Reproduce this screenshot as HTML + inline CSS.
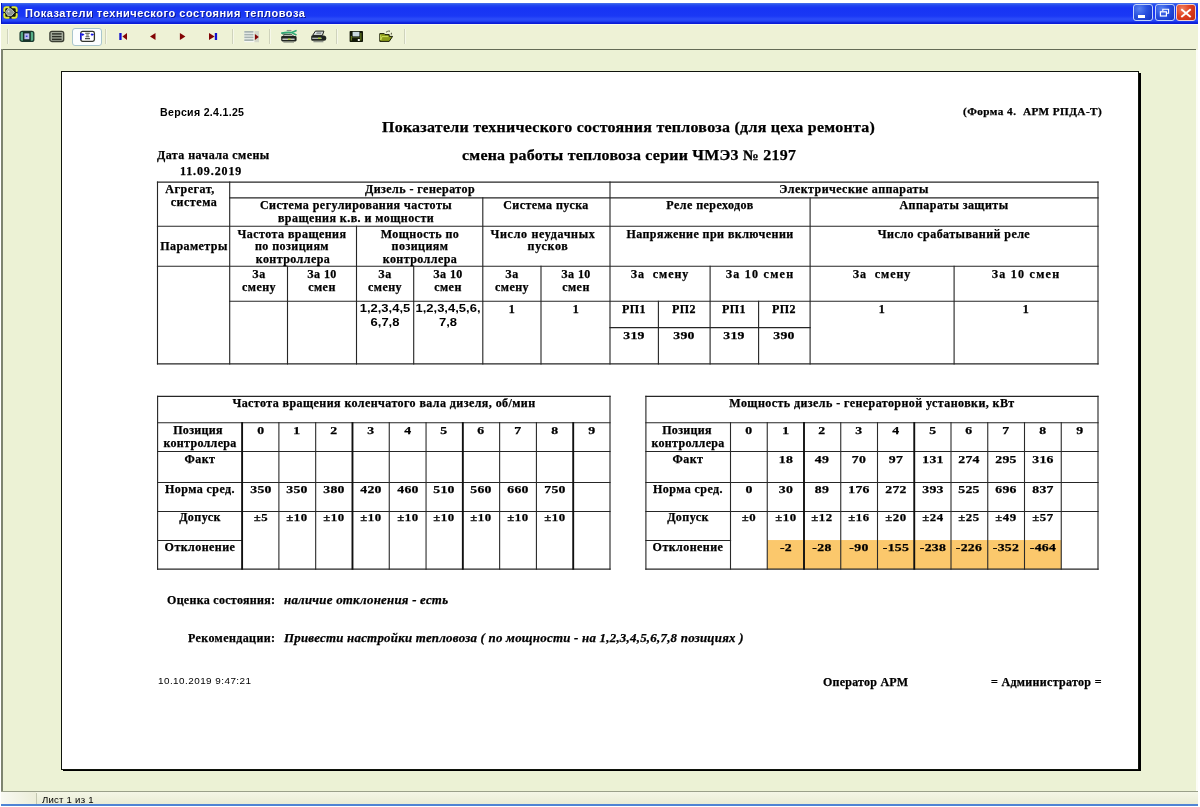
<!DOCTYPE html>
<html lang="ru"><head><meta charset="utf-8"><title>Показатели технического состояния тепловоза</title>
<style>
html,body{margin:0;padding:0}
body{width:1200px;height:807px;background:#fff;position:relative;overflow:hidden}
body>div,body>svg,body div>div,body div>svg{position:absolute}
.t{white-space:pre;will-change:transform}
.b{-webkit-text-stroke:0.25px #000}
</style></head>
<body>
<div style="left:1px;top:3px;width:1197px;height:803px;background:#EEF2D6"></div>
<div style="left:1px;top:3px;width:1197px;height:21px;background:linear-gradient(to bottom,#4a74ea 0,#2348f0 2px,#1734f4 5px,#1a38f5 13px,#2c4cf8 16px,#2444f4 18px,#0a1cd8 20px,#0a1cd8 21px)"></div>
<div style="left:1px;top:3px;width:1px;height:21px;background:#0a18c0"></div>
<svg style="left:3px;top:6px" width="15" height="13" viewBox="0 0 15 13">
<rect x="0.5" y="0.5" width="14" height="12" rx="2.5" fill="#10140c"/>
<path d="M1.3 5V3.2Q1.3 1.3 3.2 1.3H5.6" fill="none" stroke="#dde93a" stroke-width="2" stroke-linecap="round"/>
<path d="M9.4 1.3H11.8Q13.7 1.3 13.7 3.2V5" fill="none" stroke="#dde93a" stroke-width="2" stroke-linecap="round"/>
<path d="M1.3 8V9.8Q1.3 11.7 3.2 11.7H5.6" fill="none" stroke="#dde93a" stroke-width="2" stroke-linecap="round"/>
<path d="M9.4 11.7H11.8Q13.7 11.7 13.7 9.8V8" fill="none" stroke="#dde93a" stroke-width="2" stroke-linecap="round"/>
<path d="M2.6 6.2L5 2.6L8.2 2.9L11.3 6.4L8.4 9.8L4.8 9.6Z" fill="#8d9690" stroke="#c9cfca" stroke-width="0.9"/>
<circle cx="5.6" cy="5.4" r="0.9" fill="#dfe3df"/>
</svg>
<div class="t" style="left:25px;top:6px;font:bold 11px/14px 'Liberation Sans',sans-serif;color:#fff;letter-spacing:0.52px;text-shadow:1px 1px 0 #0a1890">Показатели технического состояния тепловоза</div>
<div style="left:1133px;top:4px;width:18px;height:15px;border:1px solid #c4d4fa;border-radius:3px;background:radial-gradient(circle at 30% 25%,#5a82f0 0,#2850e0 45%,#1030c0 100%)"><div style="left:4px;top:10px;width:7px;height:3px;background:#fff"></div></div>
<div style="left:1155px;top:4px;width:18px;height:15px;border:1px solid #c4d4fa;border-radius:3px;background:radial-gradient(circle at 30% 25%,#5a82f0 0,#2850e0 45%,#1030c0 100%)"><svg style="left:0;top:0" width="18" height="15" viewBox="0 0 18 15"><path d="M6.8 6V4.2H12.6V8.2H11" fill="none" stroke="#fff" stroke-width="1.1"/><rect x="4.4" y="6.8" width="6" height="4.2" fill="none" stroke="#fff" stroke-width="1.2"/></svg></div>
<div style="left:1176px;top:4px;width:18px;height:15px;border:1px solid #f4d2cc;border-radius:3px;background:radial-gradient(circle at 30% 25%,#f08060 0,#e04020 45%,#c02810 100%)"><svg style="left:0;top:0" width="18" height="15" viewBox="0 0 18 15"><path d="M4.3 4.2L13.7 12M13.7 4.2L4.3 12" stroke="#fff" stroke-width="1.9" fill="none"/></svg></div>
<div style="left:1px;top:24px;width:1197px;height:1px;background:#f8faee"></div>
<div style="left:7px;top:29px;width:1px;height:15px;background:#cfd3bc"></div>
<div style="left:8px;top:29px;width:1px;height:15px;background:#f6f8ea"></div>
<div style="left:105px;top:29px;width:1px;height:15px;background:#cfd3bc"></div>
<div style="left:106px;top:29px;width:1px;height:15px;background:#f6f8ea"></div>
<div style="left:232px;top:29px;width:1px;height:15px;background:#cfd3bc"></div>
<div style="left:233px;top:29px;width:1px;height:15px;background:#f6f8ea"></div>
<div style="left:269px;top:29px;width:1px;height:15px;background:#cfd3bc"></div>
<div style="left:270px;top:29px;width:1px;height:15px;background:#f6f8ea"></div>
<div style="left:336px;top:29px;width:1px;height:15px;background:#cfd3bc"></div>
<div style="left:337px;top:29px;width:1px;height:15px;background:#f6f8ea"></div>
<div style="left:404px;top:29px;width:1px;height:15px;background:#cfd3bc"></div>
<div style="left:405px;top:29px;width:1px;height:15px;background:#f6f8ea"></div>
<div style="left:3px;top:50px;width:1193px;height:741px;background:#ECF2D5"></div>
<div style="left:2px;top:49px;width:1194px;height:1px;background:#646b56"></div>
<div style="left:1px;top:49px;width:2px;height:742px;background:#7d8470"></div>
<div style="left:1196px;top:50px;width:2px;height:741px;background:#fcfdf6"></div>
<div style="left:1px;top:791px;width:1197px;height:1px;background:#9aa08a"></div>
<div style="left:1px;top:792px;width:1197px;height:12px;background:linear-gradient(to bottom,#f4f6e6,#e9ecd4)"></div>
<div style="left:1px;top:792px;width:35px;height:12px;background:linear-gradient(to right,#f8f9f2,#eceed9)"></div>
<div style="left:36px;top:793px;width:1px;height:11px;background:#c3c7b0"></div>
<div style="left:1px;top:804px;width:1197px;height:2px;background:#4f84d4"></div>
<svg style="left:19px;top:30px" width="16" height="13" viewBox="0 0 16 13">
<rect x="1.1" y="1.4" width="13.7" height="10" rx="2" fill="#58ae88" stroke="#1b3a2e" stroke-width="1.3"/>
<rect x="3.9" y="1.6" width="7.9" height="9.6" fill="#173128"/>
<rect x="5.4" y="3.4" width="4.9" height="5.8" fill="#bcbcf2"/>
<rect x="6.8" y="5.6" width="1.7" height="1.3" fill="#2830c8"/>
</svg>
<svg style="left:49px;top:30px" width="16" height="13" viewBox="0 0 16 13">
<rect x="0.9" y="1.3" width="13.8" height="10.2" rx="2" fill="#a4ab9c" stroke="#3a3e33" stroke-width="1.3"/>
<rect x="3" y="3.2" width="9.6" height="1.4" fill="#2b2f27"/>
<rect x="3" y="5.9" width="9.6" height="1.4" fill="#2b2f27"/>
<rect x="3" y="8.6" width="9.6" height="1.4" fill="#2b2f27"/>
</svg>
<div style="left:72px;top:28px;width:28px;height:16px;border:1px solid #a9c6cc;border-radius:3px;background:#fbfeff"></div>
<svg style="left:80px;top:30px" width="16" height="13" viewBox="0 0 16 13">
<rect x="0.8" y="1.4" width="13.6" height="10" rx="1.8" fill="#fff" stroke="#33372f" stroke-width="1.3"/>
<path d="M0.8 3V9.8" stroke="#1212e6" stroke-width="1.4"/>
<path d="M1.2 4.6L3.2 2.9V6.3ZM13.6 4.6L11.6 2.9V6.3Z" fill="#1212e6"/>
<path d="M1.5 4.6H4.2M10.8 4.6H13.6" stroke="#1212e6" stroke-width="1"/>
<path d="M5.2 3.3H9.8M6.2 5H8.8M5.6 6.8H9.4M5 8.6H10" stroke="#4a4e48" stroke-width="1.1"/>
</svg>
<svg style="left:118px;top:32px" width="12" height="10" viewBox="0 0 12 10">
<rect x="1.3" y="1" width="2.3" height="7" fill="#1010d0"/><path d="M4.4 4.5L9 1V8Z" fill="#820404"/></svg>
<svg style="left:148px;top:32px" width="12" height="10" viewBox="0 0 12 10">
<path d="M2 4.5L7.5 0.9V8.1Z" fill="#820404"/></svg>
<svg style="left:178px;top:32px" width="12" height="10" viewBox="0 0 12 10">
<path d="M7.4 4.5L1.9 0.9V8.1Z" fill="#820404"/></svg>
<svg style="left:207px;top:32px" width="12" height="10" viewBox="0 0 12 10">
<path d="M7.6 4.5L2 0.9V8.1Z" fill="#820404"/><rect x="7.8" y="1" width="2.3" height="7" fill="#1010d0"/></svg>
<svg style="left:244px;top:30px" width="16" height="13" viewBox="0 0 16 13">
<rect x="0.3" y="1" width="10.2" height="11.2" fill="#f6f8f4"/>
<rect x="10.5" y="1" width="4.5" height="11.2" fill="#d3d7ca"/>
<path d="M0.3 1.8H9.5M0.3 4.6H9.5M0.3 7.4H9.5M0.3 10.2H9.5" stroke="#a7b3b1" stroke-width="1.7"/>
<path d="M14.8 7L10.9 4V10Z" fill="#820404"/></svg>
<svg style="left:280px;top:29px" width="18" height="14" viewBox="0 0 18 14">
<path d="M6.7 1.5H11.4" stroke="#8a908a" stroke-width="1.1"/>
<path d="M3.4 7.2L4.2 5.6H12L13.6 7.2Z" fill="#f4f6f0" stroke="#2a2e28" stroke-width="0.7"/>
<path d="M2.2 7H15.2Q16.6 7 16.6 8.4V11Q16.6 12.4 15.2 12.4H2.6Q1.2 12.4 1.2 11V8.2Q1.2 7 2.2 7Z" fill="#1f2420"/>
<path d="M2.4 10.2H14.6" stroke="#f0f2ea" stroke-width="1.2"/>
<rect x="7.9" y="9.6" width="2.8" height="1.2" fill="#a8d020"/>
<path d="M3.4 13.1H14" stroke="#6e746c" stroke-width="0.9"/>
<path d="M1.8 4.1Q7 3 11.6 3.6L16 1.7M11.6 3.6L16 5.7" fill="none" stroke="#2faa76" stroke-width="1.6" stroke-linecap="round"/>
<path d="M2.4 5.2H10.5" stroke="#1c4a38" stroke-width="0.8"/>
</svg>
<svg style="left:310px;top:30px" width="18" height="13" viewBox="0 0 18 13">
<path d="M5.4 1.1H13.9L12.4 5.4H2.6Z" fill="#dfe4e4" stroke="#1c201a" stroke-width="1"/>
<path d="M6.9 2.4H11.6L11 3.8H6.1Z" fill="#737d80"/>
<path d="M2.2 5.4H14.2Q16.6 5.8 16.4 8.2Q16.2 10.8 14 10.8H2.6Q1.2 10.8 1.2 9.4V6.6Q1.2 5.4 2.2 5.4Z" fill="#1f2420"/>
<path d="M2.2 8.3H11.6" stroke="#c3c9c6" stroke-width="1.2"/>
<rect x="8" y="7.6" width="2.8" height="1.2" fill="#a8d020"/>
<path d="M3.4 11.7H13.4" stroke="#7e847e" stroke-width="1.1"/>
</svg>
<svg style="left:349px;top:30px" width="15" height="13" viewBox="0 0 15 13">
<rect x="0.6" y="1" width="13.4" height="11" rx="0.8" fill="#121808"/>
<rect x="3.6" y="1.8" width="6.8" height="4.6" fill="#c9d9de"/>
<path d="M2.3 6V10.5M11.9 3V10.5" stroke="#7e9a26" stroke-width="0.9"/>
<path d="M3 7.6H11" stroke="#5a6a30" stroke-width="0.6"/>
<rect x="8.8" y="9" width="2" height="2" fill="#f2f4ee"/>
</svg>
<svg style="left:379px;top:30px" width="15" height="13" viewBox="0 0 15 13">
<path d="M0.8 3.6H5.2L6 4.6H10.2V6.4H13.6L10.2 11.4H0.8Z" fill="#8c9c1a" stroke="#1a1e0a" stroke-width="1"/>
<path d="M1.7 4.6V10L3 6.6H9.4" fill="none" stroke="#cfe05a" stroke-width="1"/>
<path d="M7.2 2.2Q9.6 0.2 11.4 1.6" fill="none" stroke="#23270f" stroke-width="0.9" stroke-dasharray="1.6 0.8"/>
<path d="M12.4 2.2L11.6 4.2L12.9 4.5Z" fill="#23270f"/>
</svg>
<div style="left:63px;top:73px;width:1078px;height:698px;background:#000"></div>
<div style="left:61px;top:71px;width:1076px;height:697px;background:#fff;border:1px solid #10140c"></div>
<div style="left:0;top:0;width:1200px;height:807px;filter:blur(0.35px)"><svg style="left:0;top:0" width="1200" height="807" viewBox="0 0 1200 807" fill="none"><path d="M156.90 182.1H1098.60" stroke="#262626" stroke-width="1.12"/><path d="M229.10 197.9H1098.60" stroke="#262626" stroke-width="1.12"/><path d="M156.90 226.3H1098.60" stroke="#262626" stroke-width="1.12"/><path d="M156.90 266.3H1098.60" stroke="#262626" stroke-width="1.12"/><path d="M229.10 301.3H1098.60" stroke="#262626" stroke-width="1.12"/><path d="M609.40 327.6H810.70" stroke="#262626" stroke-width="1.12"/><path d="M156.90 363.9H1098.60" stroke="#262626" stroke-width="1.12"/><path d="M157.5 181.50V364.50" stroke="#262626" stroke-width="1.12"/><path d="M229.7 181.50V364.50" stroke="#262626" stroke-width="1.12"/><path d="M610.0 181.50V364.50" stroke="#262626" stroke-width="1.12"/><path d="M1098.0 181.50V364.50" stroke="#262626" stroke-width="1.12"/><path d="M482.8 197.30V364.50" stroke="#262626" stroke-width="1.12"/><path d="M810.1 197.30V364.50" stroke="#262626" stroke-width="1.12"/><path d="M356.5 225.70V364.50" stroke="#262626" stroke-width="1.12"/><path d="M287.5 265.70V364.50" stroke="#262626" stroke-width="1.12"/><path d="M413.7 265.70V364.50" stroke="#262626" stroke-width="1.12"/><path d="M541.0 265.70V364.50" stroke="#262626" stroke-width="1.12"/><path d="M710.1 265.70V364.50" stroke="#262626" stroke-width="1.12"/><path d="M954.1 265.70V364.50" stroke="#262626" stroke-width="1.12"/><path d="M658.4 300.70V364.50" stroke="#262626" stroke-width="1.12"/><path d="M758.6 300.70V364.50" stroke="#262626" stroke-width="1.12"/><path d="M157.00 396.4H610.60" stroke="#262626" stroke-width="1.12"/><path d="M157.00 422.7H610.60" stroke="#262626" stroke-width="1.12"/><path d="M157.00 451.5H610.60" stroke="#262626" stroke-width="1.12"/><path d="M157.00 482.45H610.60" stroke="#262626" stroke-width="1.12"/><path d="M157.00 511.5H610.60" stroke="#262626" stroke-width="1.12"/><path d="M157.00 569.1H610.60" stroke="#262626" stroke-width="1.12"/><path d="M157.00 540.55H242.70" stroke="#262626" stroke-width="1.12"/><path d="M157.6 395.80V569.70" stroke="#262626" stroke-width="1.12"/><path d="M610.0 395.80V569.70" stroke="#262626" stroke-width="1.12"/><path d="M242.1 422.10V569.70" stroke="#101010" stroke-width="1.9"/><path d="M278.89 422.10V569.70" stroke="#2a2a2a" stroke-width="1.1"/><path d="M315.68 422.10V569.70" stroke="#2a2a2a" stroke-width="1.1"/><path d="M352.47 422.10V569.70" stroke="#101010" stroke-width="1.9"/><path d="M389.26 422.10V569.70" stroke="#2a2a2a" stroke-width="1.1"/><path d="M426.05 422.10V569.70" stroke="#2a2a2a" stroke-width="1.1"/><path d="M462.84 422.10V569.70" stroke="#101010" stroke-width="1.9"/><path d="M499.63 422.10V569.70" stroke="#2a2a2a" stroke-width="1.1"/><path d="M536.42 422.10V569.70" stroke="#2a2a2a" stroke-width="1.1"/><path d="M573.21 422.10V569.70" stroke="#101010" stroke-width="1.9"/><rect x="767.25" y="540.05" width="294.00" height="29.05" fill="#fbc86c"/><path d="M645.30 396.4H1098.60" stroke="#262626" stroke-width="1.12"/><path d="M645.30 422.7H1098.60" stroke="#262626" stroke-width="1.12"/><path d="M645.30 451.5H1098.60" stroke="#262626" stroke-width="1.12"/><path d="M645.30 482.45H1098.60" stroke="#262626" stroke-width="1.12"/><path d="M645.30 511.5H1098.60" stroke="#262626" stroke-width="1.12"/><path d="M645.30 569.1H1098.60" stroke="#262626" stroke-width="1.12"/><path d="M645.30 540.55H731.10" stroke="#262626" stroke-width="1.12"/><path d="M645.9 395.80V569.70" stroke="#262626" stroke-width="1.12"/><path d="M1098.0 395.80V569.70" stroke="#262626" stroke-width="1.12"/><path d="M730.5 422.10V569.70" stroke="#2a2a2a" stroke-width="1.1"/><path d="M767.25 422.10V569.70" stroke="#2a2a2a" stroke-width="1.1"/><path d="M804.0 422.10V569.70" stroke="#101010" stroke-width="1.9"/><path d="M840.75 422.10V569.70" stroke="#2a2a2a" stroke-width="1.1"/><path d="M877.5 422.10V569.70" stroke="#2a2a2a" stroke-width="1.1"/><path d="M914.25 422.10V569.70" stroke="#101010" stroke-width="1.9"/><path d="M951.0 422.10V569.70" stroke="#2a2a2a" stroke-width="1.1"/><path d="M987.75 422.10V569.70" stroke="#2a2a2a" stroke-width="1.1"/><path d="M1024.5 422.10V569.70" stroke="#2a2a2a" stroke-width="1.1"/><path d="M1061.25 422.10V569.70" stroke="#2a2a2a" stroke-width="1.1"/></svg>
<div class="t" style="letter-spacing:0.278px;left:160.3px;top:108.21px;font:normal bold 10px/10px 'Liberation Sans',sans-serif;color:#000;transform:scaleX(1.06);transform-origin:0 0;">Версия 2.4.1.25</div>
<div class="t b" style="letter-spacing:0.399px;left:962.5px;top:106.81px;font:normal bold 10px/10px 'Liberation Serif',serif;color:#000;transform:scaleX(1.12);transform-origin:0 0;">(Форма 4.  АРМ РПДА-Т)</div>
<div class="t b" style="letter-spacing:0.240px;left:382.4px;top:120.0px;font:normal bold 14.5px/14.5px 'Liberation Serif',serif;color:#000;transform:scaleX(1.1);transform-origin:0 0;">Показатели технического состояния тепловоза (для цеха ремонта)</div>
<div class="t b" style="letter-spacing:0.199px;left:461.8px;top:147.61px;font:normal bold 14.5px/14.5px 'Liberation Serif',serif;color:#000;transform:scaleX(1.1);transform-origin:0 0;">смена работы тепловоза серии ЧМЭ3 № 2197</div>
<div class="t b" style="letter-spacing:0.441px;left:157px;top:149.21px;font:normal bold 12px/12px 'Liberation Serif',serif;color:#000;">Дата начала смены</div>
<div class="t b" style="letter-spacing:0.884px;left:180px;top:164.71px;font:normal bold 12px/12px 'Liberation Serif',serif;color:#000;">11.09.2019</div>
<div class="t b" style="left:-59.7px;top:184.4px;width:500px;text-align:center;font:normal bold 11.5px/11.5px 'Liberation Serif',serif;color:#000;transform:scaleX(1.045);letter-spacing:0.5px;">Агрегат,</div>
<div class="t b" style="left:-56.4px;top:196.81px;width:500px;text-align:center;font:normal bold 11.5px/11.5px 'Liberation Serif',serif;color:#000;transform:scaleX(1.045);letter-spacing:0.5px;">система</div>
<div class="t b" style="left:-56.4px;top:241.01px;width:500px;text-align:center;font:normal bold 11.5px/11.5px 'Liberation Serif',serif;color:#000;transform:scaleX(1.045);letter-spacing:0.42px;">Параметры</div>
<div class="t b" style="left:169.85px;top:184.4px;width:500px;text-align:center;font:normal bold 11.5px/11.5px 'Liberation Serif',serif;color:#000;transform:scaleX(1.045);letter-spacing:0.42px;">Дизель - генератор</div>
<div class="t b" style="left:604.0px;top:184.4px;width:500px;text-align:center;font:normal bold 11.5px/11.5px 'Liberation Serif',serif;color:#000;transform:scaleX(1.045);letter-spacing:0.42px;">Электрические аппараты</div>
<div class="t b" style="left:106.25px;top:200.21px;width:500px;text-align:center;font:normal bold 11.5px/11.5px 'Liberation Serif',serif;color:#000;transform:scaleX(1.045);letter-spacing:0.42px;">Система регулирования частоты</div>
<div class="t b" style="left:106.25px;top:212.6px;width:500px;text-align:center;font:normal bold 11.5px/11.5px 'Liberation Serif',serif;color:#000;transform:scaleX(1.045);letter-spacing:0.42px;">вращения к.в. и мощности</div>
<div class="t b" style="left:296.4px;top:200.21px;width:500px;text-align:center;font:normal bold 11.5px/11.5px 'Liberation Serif',serif;color:#000;transform:scaleX(1.045);letter-spacing:0.42px;">Система пуска</div>
<div class="t b" style="left:460.05px;top:200.21px;width:500px;text-align:center;font:normal bold 11.5px/11.5px 'Liberation Serif',serif;color:#000;transform:scaleX(1.045);letter-spacing:0.42px;">Реле переходов</div>
<div class="t b" style="left:704.05px;top:200.21px;width:500px;text-align:center;font:normal bold 11.5px/11.5px 'Liberation Serif',serif;color:#000;transform:scaleX(1.045);letter-spacing:0.42px;">Аппараты защиты</div>
<div class="t b" style="left:41.9px;top:228.6px;width:500px;text-align:center;font:normal bold 11.5px/11.5px 'Liberation Serif',serif;color:#000;transform:scaleX(1.045);letter-spacing:0.42px;">Частота вращения</div>
<div class="t b" style="left:42.1px;top:241.31px;width:500px;text-align:center;font:normal bold 11.5px/11.5px 'Liberation Serif',serif;color:#000;transform:scaleX(1.045);letter-spacing:0.42px;">по позициям</div>
<div class="t b" style="left:43.1px;top:254.01px;width:500px;text-align:center;font:normal bold 11.5px/11.5px 'Liberation Serif',serif;color:#000;transform:scaleX(1.045);letter-spacing:0.42px;">контроллера</div>
<div class="t b" style="left:169.65px;top:228.6px;width:500px;text-align:center;font:normal bold 11.5px/11.5px 'Liberation Serif',serif;color:#000;transform:scaleX(1.045);letter-spacing:0.42px;">Мощность по</div>
<div class="t b" style="left:169.65px;top:241.31px;width:500px;text-align:center;font:normal bold 11.5px/11.5px 'Liberation Serif',serif;color:#000;transform:scaleX(1.045);letter-spacing:0.42px;">позициям</div>
<div class="t b" style="left:169.65px;top:254.01px;width:500px;text-align:center;font:normal bold 11.5px/11.5px 'Liberation Serif',serif;color:#000;transform:scaleX(1.045);letter-spacing:0.42px;">контроллера</div>
<div class="t b" style="left:293.1px;top:228.6px;width:500px;text-align:center;font:normal bold 11.5px/11.5px 'Liberation Serif',serif;color:#000;transform:scaleX(1.045);letter-spacing:0.65px;">Число неудачных</div>
<div class="t b" style="left:297.9px;top:241.01px;width:500px;text-align:center;font:normal bold 11.5px/11.5px 'Liberation Serif',serif;color:#000;transform:scaleX(1.045);letter-spacing:0.65px;">пусков</div>
<div class="t b" style="left:460.05px;top:228.6px;width:500px;text-align:center;font:normal bold 11.5px/11.5px 'Liberation Serif',serif;color:#000;transform:scaleX(1.045);letter-spacing:0.42px;">Напряжение при включении</div>
<div class="t b" style="left:704.05px;top:228.6px;width:500px;text-align:center;font:normal bold 11.5px/11.5px 'Liberation Serif',serif;color:#000;transform:scaleX(1.045);letter-spacing:0.42px;">Число срабатываний реле</div>
<div class="t b" style="left:8.6px;top:268.6px;width:500px;text-align:center;font:normal bold 11.5px/11.5px 'Liberation Serif',serif;color:#000;transform:scaleX(1.045);letter-spacing:0.42px;">За</div>
<div class="t b" style="left:8.6px;top:281.71px;width:500px;text-align:center;font:normal bold 11.5px/11.5px 'Liberation Serif',serif;color:#000;transform:scaleX(1.045);letter-spacing:0.42px;">смену</div>
<div class="t b" style="left:72.0px;top:268.6px;width:500px;text-align:center;font:normal bold 11.5px/11.5px 'Liberation Serif',serif;color:#000;transform:scaleX(1.045);letter-spacing:0.42px;">За 10</div>
<div class="t b" style="left:72.0px;top:281.71px;width:500px;text-align:center;font:normal bold 11.5px/11.5px 'Liberation Serif',serif;color:#000;transform:scaleX(1.045);letter-spacing:0.42px;">смен</div>
<div class="t b" style="left:135.1px;top:268.6px;width:500px;text-align:center;font:normal bold 11.5px/11.5px 'Liberation Serif',serif;color:#000;transform:scaleX(1.045);letter-spacing:0.42px;">За</div>
<div class="t b" style="left:135.1px;top:281.71px;width:500px;text-align:center;font:normal bold 11.5px/11.5px 'Liberation Serif',serif;color:#000;transform:scaleX(1.045);letter-spacing:0.42px;">смену</div>
<div class="t b" style="left:198.25px;top:268.6px;width:500px;text-align:center;font:normal bold 11.5px/11.5px 'Liberation Serif',serif;color:#000;transform:scaleX(1.045);letter-spacing:0.42px;">За 10</div>
<div class="t b" style="left:198.25px;top:281.71px;width:500px;text-align:center;font:normal bold 11.5px/11.5px 'Liberation Serif',serif;color:#000;transform:scaleX(1.045);letter-spacing:0.42px;">смен</div>
<div class="t b" style="left:261.9px;top:268.6px;width:500px;text-align:center;font:normal bold 11.5px/11.5px 'Liberation Serif',serif;color:#000;transform:scaleX(1.045);letter-spacing:0.42px;">За</div>
<div class="t b" style="left:261.9px;top:281.71px;width:500px;text-align:center;font:normal bold 11.5px/11.5px 'Liberation Serif',serif;color:#000;transform:scaleX(1.045);letter-spacing:0.42px;">смену</div>
<div class="t b" style="left:325.5px;top:268.6px;width:500px;text-align:center;font:normal bold 11.5px/11.5px 'Liberation Serif',serif;color:#000;transform:scaleX(1.045);letter-spacing:0.42px;">За 10</div>
<div class="t b" style="left:325.5px;top:281.71px;width:500px;text-align:center;font:normal bold 11.5px/11.5px 'Liberation Serif',serif;color:#000;transform:scaleX(1.045);letter-spacing:0.42px;">смен</div>
<div class="t b" style="left:410.05px;top:268.6px;width:500px;text-align:center;font:normal bold 11.5px/11.5px 'Liberation Serif',serif;color:#000;transform:scaleX(1.045);letter-spacing:0.9px;">За  смену</div>
<div class="t b" style="left:510.1px;top:268.6px;width:500px;text-align:center;font:normal bold 11.5px/11.5px 'Liberation Serif',serif;color:#000;transform:scaleX(1.045);letter-spacing:1.2px;">За 10 смен</div>
<div class="t b" style="left:632.1px;top:268.6px;width:500px;text-align:center;font:normal bold 11.5px/11.5px 'Liberation Serif',serif;color:#000;transform:scaleX(1.045);letter-spacing:0.9px;">За  смену</div>
<div class="t b" style="left:776.05px;top:268.6px;width:500px;text-align:center;font:normal bold 11.5px/11.5px 'Liberation Serif',serif;color:#000;transform:scaleX(1.045);letter-spacing:1.2px;">За 10 смен</div>
<div class="t" style="left:135.1px;top:304.01px;width:500px;text-align:center;font:normal bold 10px/10px 'Liberation Sans',sans-serif;color:#000;transform:scaleX(1.3);letter-spacing:0px;">1,2,3,4,5</div>
<div class="t" style="left:135.1px;top:317.9px;width:500px;text-align:center;font:normal bold 10px/10px 'Liberation Sans',sans-serif;color:#000;transform:scaleX(1.3);letter-spacing:0px;">6,7,8</div>
<div class="t" style="left:198.25px;top:304.01px;width:500px;text-align:center;font:normal bold 10px/10px 'Liberation Sans',sans-serif;color:#000;transform:scaleX(1.3);letter-spacing:0px;">1,2,3,4,5,6,</div>
<div class="t" style="left:198.25px;top:317.9px;width:500px;text-align:center;font:normal bold 10px/10px 'Liberation Sans',sans-serif;color:#000;transform:scaleX(1.3);letter-spacing:0px;">7,8</div>
<div class="t b" style="left:261.9px;top:303.6px;width:500px;text-align:center;font:normal bold 11.5px/11.5px 'Liberation Serif',serif;color:#000;transform:scaleX(1.045);letter-spacing:0.42px;">1</div>
<div class="t b" style="left:325.5px;top:303.6px;width:500px;text-align:center;font:normal bold 11.5px/11.5px 'Liberation Serif',serif;color:#000;transform:scaleX(1.045);letter-spacing:0.42px;">1</div>
<div class="t b" style="left:384.2px;top:303.6px;width:500px;text-align:center;font:normal bold 11.5px/11.5px 'Liberation Serif',serif;color:#000;transform:scaleX(1.045);letter-spacing:0.42px;">РП1</div>
<div class="t b" style="left:434.25px;top:303.6px;width:500px;text-align:center;font:normal bold 11.5px/11.5px 'Liberation Serif',serif;color:#000;transform:scaleX(1.045);letter-spacing:0.42px;">РП2</div>
<div class="t b" style="left:484.35px;top:303.6px;width:500px;text-align:center;font:normal bold 11.5px/11.5px 'Liberation Serif',serif;color:#000;transform:scaleX(1.045);letter-spacing:0.42px;">РП1</div>
<div class="t b" style="left:534.35px;top:303.6px;width:500px;text-align:center;font:normal bold 11.5px/11.5px 'Liberation Serif',serif;color:#000;transform:scaleX(1.045);letter-spacing:0.42px;">РП2</div>
<div class="t b" style="left:384.2px;top:330.12px;width:500px;text-align:center;font:normal bold 11px/11px 'Liberation Serif',serif;color:#000;transform:scaleX(1.25);letter-spacing:0.25px;">319</div>
<div class="t b" style="left:434.25px;top:330.12px;width:500px;text-align:center;font:normal bold 11px/11px 'Liberation Serif',serif;color:#000;transform:scaleX(1.25);letter-spacing:0.25px;">390</div>
<div class="t b" style="left:484.35px;top:330.12px;width:500px;text-align:center;font:normal bold 11px/11px 'Liberation Serif',serif;color:#000;transform:scaleX(1.25);letter-spacing:0.25px;">319</div>
<div class="t b" style="left:534.35px;top:330.12px;width:500px;text-align:center;font:normal bold 11px/11px 'Liberation Serif',serif;color:#000;transform:scaleX(1.25);letter-spacing:0.25px;">390</div>
<div class="t b" style="left:632.1px;top:303.6px;width:500px;text-align:center;font:normal bold 11.5px/11.5px 'Liberation Serif',serif;color:#000;transform:scaleX(1.045);letter-spacing:0.42px;">1</div>
<div class="t b" style="left:776.05px;top:303.6px;width:500px;text-align:center;font:normal bold 11.5px/11.5px 'Liberation Serif',serif;color:#000;transform:scaleX(1.045);letter-spacing:0.42px;">1</div>
<div class="t b" style="left:133.8px;top:398.31px;width:500px;text-align:center;font:normal bold 11.5px/11.5px 'Liberation Serif',serif;color:#000;transform:scaleX(1.045);letter-spacing:0.4px;">Частота вращения коленчатого вала дизеля, об/мин</div>
<div class="t b" style="left:-51.65px;top:424.6px;width:500px;text-align:center;font:normal bold 11.5px/11.5px 'Liberation Serif',serif;color:#000;transform:scaleX(1.045);letter-spacing:0.3px;">Позиция</div>
<div class="t b" style="left:-50.15px;top:437.51px;width:500px;text-align:center;font:normal bold 11.5px/11.5px 'Liberation Serif',serif;color:#000;transform:scaleX(1.045);letter-spacing:0.3px;">контроллера</div>
<div class="t b" style="left:-50.15px;top:453.9px;width:500px;text-align:center;font:normal bold 11.5px/11.5px 'Liberation Serif',serif;color:#000;transform:scaleX(1.045);letter-spacing:0.42px;">Факт</div>
<div class="t b" style="left:-50.15px;top:483.65px;width:500px;text-align:center;font:normal bold 11.5px/11.5px 'Liberation Serif',serif;color:#000;transform:scaleX(1.045);letter-spacing:0.42px;">Норма сред.</div>
<div class="t b" style="left:-50.15px;top:512.4px;width:500px;text-align:center;font:normal bold 11.5px/11.5px 'Liberation Serif',serif;color:#000;transform:scaleX(1.045);letter-spacing:0.42px;">Допуск</div>
<div class="t b" style="left:-50.15px;top:541.65px;width:500px;text-align:center;font:normal bold 11.5px/11.5px 'Liberation Serif',serif;color:#000;transform:scaleX(1.045);letter-spacing:0.42px;">Отклонение</div>
<div class="t b" style="left:10.5px;top:424.71px;width:500px;text-align:center;font:normal bold 11px/11px 'Liberation Serif',serif;color:#000;transform:scaleX(1.25);letter-spacing:0.42px;">0</div>
<div class="t b" style="left:47.28px;top:424.71px;width:500px;text-align:center;font:normal bold 11px/11px 'Liberation Serif',serif;color:#000;transform:scaleX(1.25);letter-spacing:0.42px;">1</div>
<div class="t b" style="left:84.08px;top:424.71px;width:500px;text-align:center;font:normal bold 11px/11px 'Liberation Serif',serif;color:#000;transform:scaleX(1.25);letter-spacing:0.42px;">2</div>
<div class="t b" style="left:120.87px;top:424.71px;width:500px;text-align:center;font:normal bold 11px/11px 'Liberation Serif',serif;color:#000;transform:scaleX(1.25);letter-spacing:0.42px;">3</div>
<div class="t b" style="left:157.65px;top:424.71px;width:500px;text-align:center;font:normal bold 11px/11px 'Liberation Serif',serif;color:#000;transform:scaleX(1.25);letter-spacing:0.42px;">4</div>
<div class="t b" style="left:194.44px;top:424.71px;width:500px;text-align:center;font:normal bold 11px/11px 'Liberation Serif',serif;color:#000;transform:scaleX(1.25);letter-spacing:0.42px;">5</div>
<div class="t b" style="left:231.24px;top:424.71px;width:500px;text-align:center;font:normal bold 11px/11px 'Liberation Serif',serif;color:#000;transform:scaleX(1.25);letter-spacing:0.42px;">6</div>
<div class="t b" style="left:268.02px;top:424.71px;width:500px;text-align:center;font:normal bold 11px/11px 'Liberation Serif',serif;color:#000;transform:scaleX(1.25);letter-spacing:0.42px;">7</div>
<div class="t b" style="left:304.82px;top:424.71px;width:500px;text-align:center;font:normal bold 11px/11px 'Liberation Serif',serif;color:#000;transform:scaleX(1.25);letter-spacing:0.42px;">8</div>
<div class="t b" style="left:341.61px;top:424.71px;width:500px;text-align:center;font:normal bold 11px/11px 'Liberation Serif',serif;color:#000;transform:scaleX(1.25);letter-spacing:0.42px;">9</div>
<div class="t b" style="left:10.5px;top:483.65px;width:500px;text-align:center;font:normal bold 11px/11px 'Liberation Serif',serif;color:#000;transform:scaleX(1.25);letter-spacing:0.25px;">350</div>
<div class="t b" style="left:47.28px;top:483.65px;width:500px;text-align:center;font:normal bold 11px/11px 'Liberation Serif',serif;color:#000;transform:scaleX(1.25);letter-spacing:0.25px;">350</div>
<div class="t b" style="left:84.08px;top:483.65px;width:500px;text-align:center;font:normal bold 11px/11px 'Liberation Serif',serif;color:#000;transform:scaleX(1.25);letter-spacing:0.25px;">380</div>
<div class="t b" style="left:120.87px;top:483.65px;width:500px;text-align:center;font:normal bold 11px/11px 'Liberation Serif',serif;color:#000;transform:scaleX(1.25);letter-spacing:0.25px;">420</div>
<div class="t b" style="left:157.65px;top:483.65px;width:500px;text-align:center;font:normal bold 11px/11px 'Liberation Serif',serif;color:#000;transform:scaleX(1.25);letter-spacing:0.25px;">460</div>
<div class="t b" style="left:194.44px;top:483.65px;width:500px;text-align:center;font:normal bold 11px/11px 'Liberation Serif',serif;color:#000;transform:scaleX(1.25);letter-spacing:0.25px;">510</div>
<div class="t b" style="left:231.24px;top:483.65px;width:500px;text-align:center;font:normal bold 11px/11px 'Liberation Serif',serif;color:#000;transform:scaleX(1.25);letter-spacing:0.25px;">560</div>
<div class="t b" style="left:268.02px;top:483.65px;width:500px;text-align:center;font:normal bold 11px/11px 'Liberation Serif',serif;color:#000;transform:scaleX(1.25);letter-spacing:0.25px;">660</div>
<div class="t b" style="left:304.82px;top:483.65px;width:500px;text-align:center;font:normal bold 11px/11px 'Liberation Serif',serif;color:#000;transform:scaleX(1.25);letter-spacing:0.25px;">750</div>
<div class="t b" style="left:10.5px;top:512.4px;width:500px;text-align:center;font:normal bold 11px/11px 'Liberation Serif',serif;color:#000;transform:scaleX(1.16);letter-spacing:0.45px;">±5</div>
<div class="t b" style="left:47.28px;top:512.4px;width:500px;text-align:center;font:normal bold 11px/11px 'Liberation Serif',serif;color:#000;transform:scaleX(1.16);letter-spacing:0.45px;">±10</div>
<div class="t b" style="left:84.08px;top:512.4px;width:500px;text-align:center;font:normal bold 11px/11px 'Liberation Serif',serif;color:#000;transform:scaleX(1.16);letter-spacing:0.45px;">±10</div>
<div class="t b" style="left:120.87px;top:512.4px;width:500px;text-align:center;font:normal bold 11px/11px 'Liberation Serif',serif;color:#000;transform:scaleX(1.16);letter-spacing:0.45px;">±10</div>
<div class="t b" style="left:157.65px;top:512.4px;width:500px;text-align:center;font:normal bold 11px/11px 'Liberation Serif',serif;color:#000;transform:scaleX(1.16);letter-spacing:0.45px;">±10</div>
<div class="t b" style="left:194.44px;top:512.4px;width:500px;text-align:center;font:normal bold 11px/11px 'Liberation Serif',serif;color:#000;transform:scaleX(1.16);letter-spacing:0.45px;">±10</div>
<div class="t b" style="left:231.24px;top:512.4px;width:500px;text-align:center;font:normal bold 11px/11px 'Liberation Serif',serif;color:#000;transform:scaleX(1.16);letter-spacing:0.45px;">±10</div>
<div class="t b" style="left:268.02px;top:512.4px;width:500px;text-align:center;font:normal bold 11px/11px 'Liberation Serif',serif;color:#000;transform:scaleX(1.16);letter-spacing:0.45px;">±10</div>
<div class="t b" style="left:304.82px;top:512.4px;width:500px;text-align:center;font:normal bold 11px/11px 'Liberation Serif',serif;color:#000;transform:scaleX(1.16);letter-spacing:0.45px;">±10</div>
<div class="t b" style="left:621.95px;top:398.31px;width:500px;text-align:center;font:normal bold 11.5px/11.5px 'Liberation Serif',serif;color:#000;transform:scaleX(1.045);letter-spacing:0.4px;">Мощность дизель - генераторной установки, кВт</div>
<div class="t b" style="left:436.7px;top:424.6px;width:500px;text-align:center;font:normal bold 11.5px/11.5px 'Liberation Serif',serif;color:#000;transform:scaleX(1.045);letter-spacing:0.3px;">Позиция</div>
<div class="t b" style="left:438.2px;top:437.51px;width:500px;text-align:center;font:normal bold 11.5px/11.5px 'Liberation Serif',serif;color:#000;transform:scaleX(1.045);letter-spacing:0.3px;">контроллера</div>
<div class="t b" style="left:438.2px;top:453.9px;width:500px;text-align:center;font:normal bold 11.5px/11.5px 'Liberation Serif',serif;color:#000;transform:scaleX(1.045);letter-spacing:0.42px;">Факт</div>
<div class="t b" style="left:438.2px;top:483.65px;width:500px;text-align:center;font:normal bold 11.5px/11.5px 'Liberation Serif',serif;color:#000;transform:scaleX(1.045);letter-spacing:0.42px;">Норма сред.</div>
<div class="t b" style="left:438.2px;top:512.4px;width:500px;text-align:center;font:normal bold 11.5px/11.5px 'Liberation Serif',serif;color:#000;transform:scaleX(1.045);letter-spacing:0.42px;">Допуск</div>
<div class="t b" style="left:438.2px;top:541.65px;width:500px;text-align:center;font:normal bold 11.5px/11.5px 'Liberation Serif',serif;color:#000;transform:scaleX(1.045);letter-spacing:0.42px;">Отклонение</div>
<div class="t b" style="left:498.88px;top:424.71px;width:500px;text-align:center;font:normal bold 11px/11px 'Liberation Serif',serif;color:#000;transform:scaleX(1.25);letter-spacing:0.42px;">0</div>
<div class="t b" style="left:535.62px;top:424.71px;width:500px;text-align:center;font:normal bold 11px/11px 'Liberation Serif',serif;color:#000;transform:scaleX(1.25);letter-spacing:0.42px;">1</div>
<div class="t b" style="left:572.38px;top:424.71px;width:500px;text-align:center;font:normal bold 11px/11px 'Liberation Serif',serif;color:#000;transform:scaleX(1.25);letter-spacing:0.42px;">2</div>
<div class="t b" style="left:609.12px;top:424.71px;width:500px;text-align:center;font:normal bold 11px/11px 'Liberation Serif',serif;color:#000;transform:scaleX(1.25);letter-spacing:0.42px;">3</div>
<div class="t b" style="left:645.88px;top:424.71px;width:500px;text-align:center;font:normal bold 11px/11px 'Liberation Serif',serif;color:#000;transform:scaleX(1.25);letter-spacing:0.42px;">4</div>
<div class="t b" style="left:682.62px;top:424.71px;width:500px;text-align:center;font:normal bold 11px/11px 'Liberation Serif',serif;color:#000;transform:scaleX(1.25);letter-spacing:0.42px;">5</div>
<div class="t b" style="left:719.38px;top:424.71px;width:500px;text-align:center;font:normal bold 11px/11px 'Liberation Serif',serif;color:#000;transform:scaleX(1.25);letter-spacing:0.42px;">6</div>
<div class="t b" style="left:756.12px;top:424.71px;width:500px;text-align:center;font:normal bold 11px/11px 'Liberation Serif',serif;color:#000;transform:scaleX(1.25);letter-spacing:0.42px;">7</div>
<div class="t b" style="left:792.88px;top:424.71px;width:500px;text-align:center;font:normal bold 11px/11px 'Liberation Serif',serif;color:#000;transform:scaleX(1.25);letter-spacing:0.42px;">8</div>
<div class="t b" style="left:829.62px;top:424.71px;width:500px;text-align:center;font:normal bold 11px/11px 'Liberation Serif',serif;color:#000;transform:scaleX(1.25);letter-spacing:0.42px;">9</div>
<div class="t b" style="left:535.62px;top:453.9px;width:500px;text-align:center;font:normal bold 11px/11px 'Liberation Serif',serif;color:#000;transform:scaleX(1.25);letter-spacing:0.25px;">18</div>
<div class="t b" style="left:572.38px;top:453.9px;width:500px;text-align:center;font:normal bold 11px/11px 'Liberation Serif',serif;color:#000;transform:scaleX(1.25);letter-spacing:0.25px;">49</div>
<div class="t b" style="left:609.12px;top:453.9px;width:500px;text-align:center;font:normal bold 11px/11px 'Liberation Serif',serif;color:#000;transform:scaleX(1.25);letter-spacing:0.25px;">70</div>
<div class="t b" style="left:645.88px;top:453.9px;width:500px;text-align:center;font:normal bold 11px/11px 'Liberation Serif',serif;color:#000;transform:scaleX(1.25);letter-spacing:0.25px;">97</div>
<div class="t b" style="left:682.62px;top:453.9px;width:500px;text-align:center;font:normal bold 11px/11px 'Liberation Serif',serif;color:#000;transform:scaleX(1.25);letter-spacing:0.25px;">131</div>
<div class="t b" style="left:719.38px;top:453.9px;width:500px;text-align:center;font:normal bold 11px/11px 'Liberation Serif',serif;color:#000;transform:scaleX(1.25);letter-spacing:0.25px;">274</div>
<div class="t b" style="left:756.12px;top:453.9px;width:500px;text-align:center;font:normal bold 11px/11px 'Liberation Serif',serif;color:#000;transform:scaleX(1.25);letter-spacing:0.25px;">295</div>
<div class="t b" style="left:792.88px;top:453.9px;width:500px;text-align:center;font:normal bold 11px/11px 'Liberation Serif',serif;color:#000;transform:scaleX(1.25);letter-spacing:0.25px;">316</div>
<div class="t b" style="left:498.88px;top:483.65px;width:500px;text-align:center;font:normal bold 11px/11px 'Liberation Serif',serif;color:#000;transform:scaleX(1.25);letter-spacing:0.25px;">0</div>
<div class="t b" style="left:535.62px;top:483.65px;width:500px;text-align:center;font:normal bold 11px/11px 'Liberation Serif',serif;color:#000;transform:scaleX(1.25);letter-spacing:0.25px;">30</div>
<div class="t b" style="left:572.38px;top:483.65px;width:500px;text-align:center;font:normal bold 11px/11px 'Liberation Serif',serif;color:#000;transform:scaleX(1.25);letter-spacing:0.25px;">89</div>
<div class="t b" style="left:609.12px;top:483.65px;width:500px;text-align:center;font:normal bold 11px/11px 'Liberation Serif',serif;color:#000;transform:scaleX(1.25);letter-spacing:0.25px;">176</div>
<div class="t b" style="left:645.88px;top:483.65px;width:500px;text-align:center;font:normal bold 11px/11px 'Liberation Serif',serif;color:#000;transform:scaleX(1.25);letter-spacing:0.25px;">272</div>
<div class="t b" style="left:682.62px;top:483.65px;width:500px;text-align:center;font:normal bold 11px/11px 'Liberation Serif',serif;color:#000;transform:scaleX(1.25);letter-spacing:0.25px;">393</div>
<div class="t b" style="left:719.38px;top:483.65px;width:500px;text-align:center;font:normal bold 11px/11px 'Liberation Serif',serif;color:#000;transform:scaleX(1.25);letter-spacing:0.25px;">525</div>
<div class="t b" style="left:756.12px;top:483.65px;width:500px;text-align:center;font:normal bold 11px/11px 'Liberation Serif',serif;color:#000;transform:scaleX(1.25);letter-spacing:0.25px;">696</div>
<div class="t b" style="left:792.88px;top:483.65px;width:500px;text-align:center;font:normal bold 11px/11px 'Liberation Serif',serif;color:#000;transform:scaleX(1.25);letter-spacing:0.25px;">837</div>
<div class="t b" style="left:498.88px;top:512.4px;width:500px;text-align:center;font:normal bold 11px/11px 'Liberation Serif',serif;color:#000;transform:scaleX(1.16);letter-spacing:0.45px;">±0</div>
<div class="t b" style="left:535.62px;top:512.4px;width:500px;text-align:center;font:normal bold 11px/11px 'Liberation Serif',serif;color:#000;transform:scaleX(1.16);letter-spacing:0.45px;">±10</div>
<div class="t b" style="left:572.38px;top:512.4px;width:500px;text-align:center;font:normal bold 11px/11px 'Liberation Serif',serif;color:#000;transform:scaleX(1.16);letter-spacing:0.45px;">±12</div>
<div class="t b" style="left:609.12px;top:512.4px;width:500px;text-align:center;font:normal bold 11px/11px 'Liberation Serif',serif;color:#000;transform:scaleX(1.16);letter-spacing:0.45px;">±16</div>
<div class="t b" style="left:645.88px;top:512.4px;width:500px;text-align:center;font:normal bold 11px/11px 'Liberation Serif',serif;color:#000;transform:scaleX(1.16);letter-spacing:0.45px;">±20</div>
<div class="t b" style="left:682.62px;top:512.4px;width:500px;text-align:center;font:normal bold 11px/11px 'Liberation Serif',serif;color:#000;transform:scaleX(1.16);letter-spacing:0.45px;">±24</div>
<div class="t b" style="left:719.38px;top:512.4px;width:500px;text-align:center;font:normal bold 11px/11px 'Liberation Serif',serif;color:#000;transform:scaleX(1.16);letter-spacing:0.45px;">±25</div>
<div class="t b" style="left:756.12px;top:512.4px;width:500px;text-align:center;font:normal bold 11px/11px 'Liberation Serif',serif;color:#000;transform:scaleX(1.16);letter-spacing:0.45px;">±49</div>
<div class="t b" style="left:792.88px;top:512.4px;width:500px;text-align:center;font:normal bold 11px/11px 'Liberation Serif',serif;color:#000;transform:scaleX(1.16);letter-spacing:0.45px;">±57</div>
<div class="t b" style="left:535.62px;top:541.65px;width:500px;text-align:center;font:normal bold 11px/11px 'Liberation Serif',serif;color:#000;transform:scaleX(1.25);letter-spacing:0.25px;">-2</div>
<div class="t b" style="left:572.38px;top:541.65px;width:500px;text-align:center;font:normal bold 11px/11px 'Liberation Serif',serif;color:#000;transform:scaleX(1.25);letter-spacing:0.25px;">-28</div>
<div class="t b" style="left:609.12px;top:541.65px;width:500px;text-align:center;font:normal bold 11px/11px 'Liberation Serif',serif;color:#000;transform:scaleX(1.25);letter-spacing:0.25px;">-90</div>
<div class="t b" style="left:645.88px;top:541.65px;width:500px;text-align:center;font:normal bold 11px/11px 'Liberation Serif',serif;color:#000;transform:scaleX(1.25);letter-spacing:0.25px;">-155</div>
<div class="t b" style="left:682.62px;top:541.65px;width:500px;text-align:center;font:normal bold 11px/11px 'Liberation Serif',serif;color:#000;transform:scaleX(1.25);letter-spacing:0.25px;">-238</div>
<div class="t b" style="left:719.38px;top:541.65px;width:500px;text-align:center;font:normal bold 11px/11px 'Liberation Serif',serif;color:#000;transform:scaleX(1.25);letter-spacing:0.25px;">-226</div>
<div class="t b" style="left:756.12px;top:541.65px;width:500px;text-align:center;font:normal bold 11px/11px 'Liberation Serif',serif;color:#000;transform:scaleX(1.25);letter-spacing:0.25px;">-352</div>
<div class="t b" style="left:792.88px;top:541.65px;width:500px;text-align:center;font:normal bold 11px/11px 'Liberation Serif',serif;color:#000;transform:scaleX(1.25);letter-spacing:0.25px;">-464</div>
<div class="t b" style="letter-spacing:0.300px;left:167px;top:593.71px;font:normal bold 12px/12px 'Liberation Serif',serif;color:#000;">Оценка состояния:</div>
<div class="t b" style="letter-spacing:0.215px;left:283.7px;top:594.71px;font:italic bold 11.5px/11.5px 'Liberation Serif',serif;color:#000;transform:scaleX(1.12);transform-origin:0 0;">наличие отклонения - есть</div>
<div class="t b" style="letter-spacing:0.396px;left:188.2px;top:631.51px;font:normal bold 12px/12px 'Liberation Serif',serif;color:#000;">Рекомендации:</div>
<div class="t b" style="letter-spacing:0.218px;left:284px;top:632.51px;font:italic bold 11.5px/11.5px 'Liberation Serif',serif;color:#000;transform:scaleX(1.12);transform-origin:0 0;">Привести настройки тепловоза ( по мощности - на 1,2,3,4,5,6,7,8 позициях )</div>
<div class="t" style="letter-spacing:0.410px;left:158px;top:677.2px;font:normal normal 9px/9px 'Liberation Sans',sans-serif;color:#000;transform:scaleX(1.1);transform-origin:0 0;">10.10.2019 9:47:21</div>
<div class="t b" style="letter-spacing:0.232px;left:823.3px;top:676.01px;font:normal bold 12px/12px 'Liberation Serif',serif;color:#000;">Оператор АРМ</div>
<div class="t b" style="letter-spacing:0.314px;left:990.5px;top:676.01px;font:normal bold 12px/12px 'Liberation Serif',serif;color:#000;">= Администратор =</div>
</div>
<div class="t"  style="letter-spacing:0.222px;left:42px;top:795.01px;font:normal normal 9.6px/9.6px 'Liberation Sans',sans-serif;color:#000;">Лист 1 из 1</div>
</body></html>
